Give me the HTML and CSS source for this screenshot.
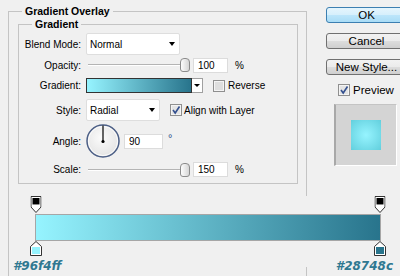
FILE: index.html
```html
<!DOCTYPE html>
<html>
  <head>
    <link rel="stylesheet" href="styles.css">
  </head>

  <body>
    <div class="dialog">
      <fieldset class="effect">
        <legend>Gradient Overlay</legend>

        <fieldset class="group">
          <legend>Gradient</legend>

          <div class="row row-blend">
            <span class="label">Blend Mode:</span>
            <div class="select select-blend"><span>Normal</span><i class="arrow"></i></div>
          </div>

          <div class="row row-opacity">
            <span class="label">Opacity:</span>
            <div class="slider"><div class="thumb"></div></div>
            <div class="field field-num">100</div>
            <span class="unit">%</span>
          </div>

          <div class="row row-gradient">
            <span class="label">Gradient:</span>
            <div class="picker"><div class="swatch"></div><div class="picker-btn"><i class="arrow"></i></div></div>
            <div class="check check-reverse">
              <svg width="12" height="12" viewBox="0 0 12 12">
                <rect x="0.5" y="0.5" width="11" height="11" fill="#f4f4f4" stroke="#8f8f8f"/>
                <rect x="2" y="2" width="8" height="8" fill="#dedede"/>
              </svg>
              <span>Reverse</span>
            </div>
          </div>

          <div class="row row-style">
            <span class="label">Style:</span>
            <div class="select select-style"><span>Radial</span><i class="arrow"></i></div>
            <div class="check check-align">
              <svg width="12" height="12" viewBox="0 0 12 12">
                <rect x="0.5" y="0.5" width="11" height="11" fill="#f4f4f4" stroke="#8f8f8f"/>
                <rect x="2" y="2" width="8" height="8" fill="#e4e4e4"/>
                <path d="M3 6 L5.2 9 L9.5 2.5" fill="none" stroke="#34508f" stroke-width="1.6"/>
              </svg>
              <span>Align with Layer</span>
            </div>
          </div>

          <div class="row row-angle">
            <span class="label">Angle:</span>
            <svg class="dial" width="34" height="34" viewBox="0 0 34 34">
              <defs>
                <radialGradient id="dialfill" cx="0.45" cy="0.4" r="0.6">
                  <stop offset="0" stop-color="#fbfbfb"/>
                  <stop offset="1" stop-color="#e4e4e4"/>
                </radialGradient>
              </defs>
              <circle cx="17" cy="17" r="16" fill="url(#dialfill)" stroke="#4c5f86" stroke-width="1.5"/>
              <circle cx="17" cy="17" r="14.6" fill="none" stroke="#ffffff" stroke-width="0.8"/>
              <line x1="17" y1="17.5" x2="17" y2="1.5" stroke="#000" stroke-width="1.2"/>
              <circle cx="17" cy="17.5" r="1.6" fill="#000"/>
            </svg>
            <div class="field field-angle">90</div>
            <span class="degree">&deg;</span>
          </div>

          <div class="row row-scale">
            <span class="label">Scale:</span>
            <div class="slider"><div class="thumb"></div></div>
            <div class="field field-num">150</div>
            <span class="unit">%</span>
          </div>
        </fieldset>

        <div class="editor">
          <div class="stops stops-top">
            <svg class="stop stop-left" width="11" height="17" viewBox="0 0 11 17">
              <path d="M0.5 0.5 H10.5 V11 L5.5 16.5 L0.5 11 Z" fill="#fff" stroke="#333"/>
              <rect x="2" y="2" width="7" height="6" fill="#000"/>
              <rect x="2" y="8" width="7" height="1" fill="#888"/>
            </svg>
            <svg class="stop stop-right" width="11" height="17" viewBox="0 0 11 17">
              <path d="M0.5 0.5 H10.5 V11 L5.5 16.5 L0.5 11 Z" fill="#fff" stroke="#333"/>
              <rect x="2" y="2" width="7" height="6" fill="#000"/>
              <rect x="2" y="8" width="7" height="1" fill="#888"/>
            </svg>
          </div>

          <div class="bar"></div>

          <div class="stops stops-bottom">
            <svg class="stop stop-left" width="12" height="15" viewBox="0 0 12 15">
              <path d="M6 0.5 L11.5 5.5 V14.5 H0.5 V5.5 Z" fill="#fff" stroke="#333"/>
              <rect x="2" y="6" width="8" height="7" fill="#96f4ff"/>
            </svg>
            <svg class="stop stop-right" width="12" height="15" viewBox="0 0 12 15">
              <path d="M6 0.5 L11.5 5.5 V14.5 H0.5 V5.5 Z" fill="#fff" stroke="#333"/>
              <rect x="2" y="6" width="8" height="7" fill="#28748c"/>
            </svg>
          </div>

          <div class="hexes">
            <span>#96f4ff</span>
            <span>#28748c</span>
          </div>
        </div>
      </fieldset>

      <div class="side">
        <button class="btn btn-default">OK</button>
        <button class="btn">Cancel</button>
        <button class="btn">New Style...</button>

        <div class="preview-check">
          <svg width="12" height="12" viewBox="0 0 12 12">
            <rect x="0.5" y="0.5" width="11" height="11" fill="#f4f4f4" stroke="#8f8f8f"/>
            <rect x="2" y="2" width="8" height="8" fill="#e4e4e4"/>
            <path d="M3 6 L5.2 9 L9.5 2.5" fill="none" stroke="#34508f" stroke-width="1.6"/>
          </svg>
          <span>Preview</span>
        </div>

        <div class="preview">
          <div class="preview-swatch"></div>
        </div>
      </div>
    </div>
  </body>
</html>
```

FILE: styles.css
```css
body {
  margin: 0;
  height: 276px;
  overflow: hidden;
  background-color: #f0f0f0;
  font-family: "Liberation Sans", Arial, sans-serif;
  font-size: 10px;
  color: #000;
}

.dialog {
  display: flex;
  align-items: flex-start;
}

fieldset {
  box-sizing: border-box;
  margin: 0;
  padding: 0;
  min-width: 0;
  border: 1px solid #c4c4c4;
}

legend {
  margin-left: 13px;
  padding: 0 3px;
  font-size: 10.5px;
  font-weight: 700;
  line-height: 14px;
}

/* the group box runs on past the bottom of the shot */
.effect {
  flex-shrink: 0;
  width: 299px;
  height: 272px;
  margin: 4px 0 0 8px;
  border-bottom: none;
}

.group {
  width: 280px;
  margin: -1px 0 0 9px;
  padding: 2px 0 6px 0;
}

.row {
  display: flex;
  align-items: center;
}

.row-blend { height: 22px; }
.row-opacity { height: 14px; margin-top: 3px; }
.row-gradient { height: 15px; margin-top: 6px; }
.row-style { height: 22px; margin-top: 6px; }
.row-angle { height: 34px; margin-top: 3px; }
.row-scale { height: 15px; margin-top: 4px; }

.label {
  width: 62px;
  margin-right: 5px;
  text-align: right;
}

.select {
  box-sizing: border-box;
  height: 22px;
  display: flex;
  align-items: center;
  justify-content: space-between;
  padding: 0 4px 0 3px;
  background-color: #fff;
  border: 1px solid #dedede;
  border-radius: 2px;
}

.select-blend { width: 94px; }
.select-style { width: 74px; }

.arrow {
  width: 0;
  height: 0;
  border-left: 3.5px solid transparent;
  border-right: 3.5px solid transparent;
  border-top: 4px solid #000;
}

.slider {
  position: relative;
  width: 102px;
  height: 14px;
  margin-left: 2px;
  display: flex;
  align-items: center;
}

.slider::before {
  content: "";
  flex: 1;
  height: 1px;
  background-color: #b4b4b4;
  border-bottom: 1px solid #fff;
}

.thumb {
  position: absolute;
  right: 0;
  top: 0;
  box-sizing: border-box;
  width: 10px;
  height: 14px;
  border: 1px solid #8c8c8c;
  border-radius: 4px 4px 3px 3px;
  background: linear-gradient(90deg, #fdfdfd, #d6d6d6);
}

.field {
  box-sizing: border-box;
  height: 15px;
  display: flex;
  align-items: center;
  padding-left: 4px;
  background-color: #fff;
  border: 1px solid #dcdcdc;
}

.field-num {
  width: 35px;
  margin-left: 3px;
}

.unit {
  margin-left: 7px;
}

.picker {
  display: flex;
  height: 15px;
}

.swatch {
  box-sizing: border-box;
  width: 106px;
  border: 1px solid #333;
  background: linear-gradient(90deg, #96f4ff, #28748c);
}

.picker-btn {
  box-sizing: border-box;
  width: 11px;
  display: flex;
  align-items: center;
  justify-content: center;
  background-color: #fff;
  border: 1px solid #a0a0a0;
  border-left: none;
}

.picker-btn .arrow {
  border-left-width: 3px;
  border-right-width: 3px;
  border-top-width: 3px;
}

.check {
  display: flex;
  align-items: center;
  gap: 3px;
  margin-left: 10px;
}

.check svg {
  display: block;
}

.check-align {
  gap: 2px;
}

.dial {
  display: block;
}

.field-angle {
  width: 39px;
  margin-left: 4px;
}

.degree {
  align-self: flex-start;
  margin: 8px 0 0 5px;
  font-size: 11px;
  color: #2a4f8a;
}

.editor {
  position: relative;
  height: 71px;
  margin: 12px -94px 0 0;
  background-color: #f0f0f0;
}

.stops {
  position: relative;
  width: 344px;
  margin-left: 27px;
}

.stops-top { height: 18px; }
.stops-bottom { height: 16px; }

.stop {
  position: absolute;
  top: 0;
  transform: translateX(-50%);
}

.stop-left { left: 0; }
.stop-right { left: 100%; }

.bar {
  box-sizing: border-box;
  width: 346px;
  height: 27px;
  margin-left: 26px;
  border: 1px solid #a6a6a6;
  background: linear-gradient(90deg, #96f4ff, #28748c);
}

.hexes {
  display: flex;
  justify-content: space-between;
  padding: 2px 7px 0 4px;
  font-family: "DejaVu Sans", Verdana, sans-serif;
  font-size: 12px;
  font-weight: 700;
  font-style: italic;
  line-height: 14px;
  color: #2f7891;
}

.side {
  flex-shrink: 0;
  display: flex;
  flex-direction: column;
  margin-left: 19px;
  padding-top: 7px;
}

.btn {
  width: 81px;
  height: 16px;
  margin: 0 0 10px 0;
  padding: 0;
  font-family: "Liberation Sans", Arial, sans-serif;
  font-size: 11.5px;
  line-height: 14px;
  color: #000;
  border: 1px solid #707070;
  border-radius: 3px;
  background: linear-gradient(#f2f2f2, #ebebeb 50%, #dddddd 50%, #cfcfcf);
}

.btn-default {
  border-color: #3c7fb1;
  background: linear-gradient(#e5f5fd, #d6effc 50%, #bde6fb 50%, #a9dcf6);
}

.preview-check {
  display: flex;
  align-items: center;
  gap: 3px;
  height: 12px;
  margin-top: -1px;
  padding-left: 12px;
  font-size: 11.5px;
}

.preview-check svg {
  display: block;
}

.preview {
  box-sizing: border-box;
  width: 63px;
  height: 62px;
  margin: 8px 0 0 8px;
  display: flex;
  align-items: center;
  justify-content: center;
  background-color: #d4d4d4;
  border: 1px solid #fff;
  border-top-color: #c4c4c4;
  border-left: 2px solid #a8a8a8;
}

.preview-swatch {
  width: 30px;
  height: 30px;
  background: radial-gradient(circle, #96f4ff, #62cfdd);
}
```
